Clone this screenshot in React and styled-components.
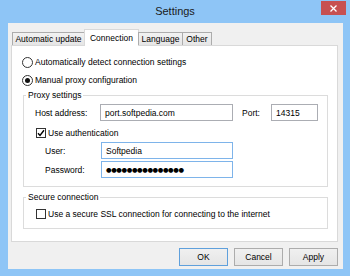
import React from "react";
import styled, { createGlobalStyle } from "styled-components";

const GlobalStyle = createGlobalStyle`
  html, body {
    margin: 0;
    padding: 0;
  }
  body {
    font-family: "Liberation Sans", Arial, sans-serif;
    font-size: 8.5px;
    color: #000;
  }
`;

const Window = styled.div`
  width: 350px;
  height: 276px;
  box-sizing: border-box;
  background: #8ec5f6;
  display: flex;
  flex-direction: column;
`;

const TitleBar = styled.div`
  height: 23px;
  display: grid;
  grid-template-columns: 1fr auto 1fr;
  align-items: start;
`;

const Title = styled.div`
  grid-column: 2;
  font-size: 11px;
  line-height: 22px;
  color: #1a1a1a;
`;

const CloseButton = styled.div`
  grid-column: 3;
  justify-self: end;
  width: 25px;
  height: 14px;
  margin: 1px 4px 0 0;
  background: #c75050;
  display: flex;
  align-items: center;
  justify-content: center;
`;

const Client = styled.div`
  flex: 1;
  margin: 0 7px 7px 8px;
  background: #f0f0f0;
  padding: 6px 5px 3px 3px;
  display: flex;
  flex-direction: column;
`;

const TabStrip = styled.div`
  height: 16px;
  display: flex;
  align-items: flex-end;
  margin-left: 1px;
  position: relative;
  z-index: 1;
`;

const Tab = styled.div`
  width: ${(p) => p.$w}px;
  box-sizing: border-box;
  height: ${(p) => (p.$active ? 17 : 13)}px;
  margin-bottom: ${(p) => (p.$active ? -1 : 0)}px;
  margin-left: -1px;
  border: 1px solid #acacac;
  border-bottom: ${(p) => (p.$active ? "none" : "0")};
  border-color: ${(p) => (p.$active ? "#d9d9d9" : "#acacac")};
  background: ${(p) =>
    p.$active ? "#fff" : "linear-gradient(#f2f2f2, #e5e5e5)"};
  display: flex;
  align-items: center;
  justify-content: center;
  white-space: nowrap;
  &:first-child {
    margin-left: 0;
  }
`;

const Panel = styled.div`
  height: 197px;
  box-sizing: border-box;
  border: 1px solid #d9d9d9;
  background: #fff;
  padding: 9px 0 0 0;
  display: flex;
  flex-direction: column;
`;

const RadioRow = styled.label`
  display: flex;
  align-items: center;
  gap: 2px;
  height: 14px;
  margin: ${(p) => (p.$first ? 0 : 4)}px 0 0 10px;
`;

const RadioCircle = styled.span`
  width: 11px;
  height: 11px;
  box-sizing: border-box;
  border: 1px solid #333;
  border-radius: 50%;
  background: #fff;
  display: flex;
  align-items: center;
  justify-content: center;
  &::after {
    content: "";
    width: 5px;
    height: 5px;
    border-radius: 50%;
    background: ${(p) => (p.$checked ? "#111" : "transparent")};
  }
`;

const GroupBox = styled.fieldset`
  margin: ${(p) => p.$top}px 9px 0 11px;
  padding: 4px 0 8px 0;
  border: 1px solid #dcdcdc;
  min-width: 0;
`;

const Legend = styled.legend`
  padding: 0 2px;
  margin-left: 2px;
  line-height: 10px;
  font-size: 8.5px;
`;

const FieldRow = styled.div`
  display: flex;
  align-items: center;
  height: 17px;
  margin-top: ${(p) => p.$top || 0}px;
  padding-left: ${(p) => p.$indent}px;
`;

const FieldLabel = styled.span`
  width: ${(p) => p.$w}px;
  margin-left: ${(p) => p.$gap || 0}px;
  white-space: nowrap;
`;

const TextBox = styled.div`
  width: ${(p) => p.$w}px;
  height: 17px;
  box-sizing: border-box;
  border: 1px solid ${(p) => (p.$hot ? "#7eb4ea" : "#abadb3")};
  background: #fff;
  padding-left: 4px;
  display: flex;
  align-items: center;
  white-space: nowrap;
  overflow: hidden;
`;

const Dots = styled.span`
  font-family: "DejaVu Sans", sans-serif;
  font-size: 6.4px;
  letter-spacing: -0.4px;
`;

const CheckRow = styled.label`
  display: flex;
  align-items: center;
  gap: 2px;
  height: 13px;
  margin-top: ${(p) => p.$top || 0}px;
  padding-left: 12px;
  white-space: nowrap;
`;

const CheckBox = styled.span`
  width: 10px;
  height: 10px;
  box-sizing: border-box;
  border: 1px solid #333;
  background: #fff;
  display: flex;
  align-items: center;
  justify-content: center;
`;

const Footer = styled.div`
  display: flex;
  justify-content: flex-end;
  gap: 6px;
  margin-top: 6px;
`;

const Button = styled.div`
  width: 49px;
  height: 18px;
  box-sizing: border-box;
  border: 1px solid ${(p) => (p.$default ? "#5fa0dc" : "#acacac")};
  background: linear-gradient(#f0f0f0, #e5e5e5);
  display: flex;
  align-items: center;
  justify-content: center;
`;

const Tick = () => (
  <svg width="8" height="8" viewBox="0 0 8 8">
    <path d="M1 4.2 L3 6.4 L7 1.2" fill="none" stroke="#000" strokeWidth="1.4" />
  </svg>
);

export default function App() {
  return (
    <>
      <GlobalStyle />
      <Window>
        <TitleBar>
          <Title>Settings</Title>
          <CloseButton>
            <svg width="7" height="7" viewBox="0 0 7 7">
              <path d="M0.5 0.5 L6.5 6.5 M6.5 0.5 L0.5 6.5" stroke="#fff" strokeWidth="1.3" />
            </svg>
          </CloseButton>
        </TitleBar>
        <Client>
          <TabStrip>
            <Tab $w={73}>Automatic update</Tab>
            <Tab $w={55} $active>Connection</Tab>
            <Tab $w={45}>Language</Tab>
            <Tab $w={30}>Other</Tab>
          </TabStrip>
          <Panel>
            <RadioRow $first>
              <RadioCircle />
              Automatically detect connection settings
            </RadioRow>
            <RadioRow>
              <RadioCircle $checked />
              Manual proxy configuration
            </RadioRow>
            <GroupBox $top={3}>
              <Legend>Proxy settings</Legend>
              <FieldRow $indent={11}>
                <FieldLabel $w={65}>Host address:</FieldLabel>
                <TextBox $w={133}>port.softpedia.com</TextBox>
                <FieldLabel $w={29} $gap={9}>Port:</FieldLabel>
                <TextBox $w={47}>14315</TextBox>
              </FieldRow>
              <CheckRow $top={5}>
                <CheckBox>
                  <Tick />
                </CheckBox>
                Use authentication
              </CheckRow>
              <FieldRow $indent={21} $top={3}>
                <FieldLabel $w={56}>User:</FieldLabel>
                <TextBox $w={132} $hot>Softpedia</TextBox>
              </FieldRow>
              <FieldRow $indent={21} $top={2}>
                <FieldLabel $w={56}>Password:</FieldLabel>
                <TextBox $w={132} $hot>
                  <Dots>●●●●●●●●●●●●●●●</Dots>
                </TextBox>
              </FieldRow>
            </GroupBox>
            <GroupBox $top={5}>
              <Legend>Secure connection</Legend>
              <CheckRow $top={1}>
                <CheckBox />
                Use a secure SSL connection for connecting to the internet
              </CheckRow>
            </GroupBox>
          </Panel>
          <Footer>
            <Button $default>OK</Button>
            <Button>Cancel</Button>
            <Button>Apply</Button>
          </Footer>
        </Client>
      </Window>
    </>
  );
}
